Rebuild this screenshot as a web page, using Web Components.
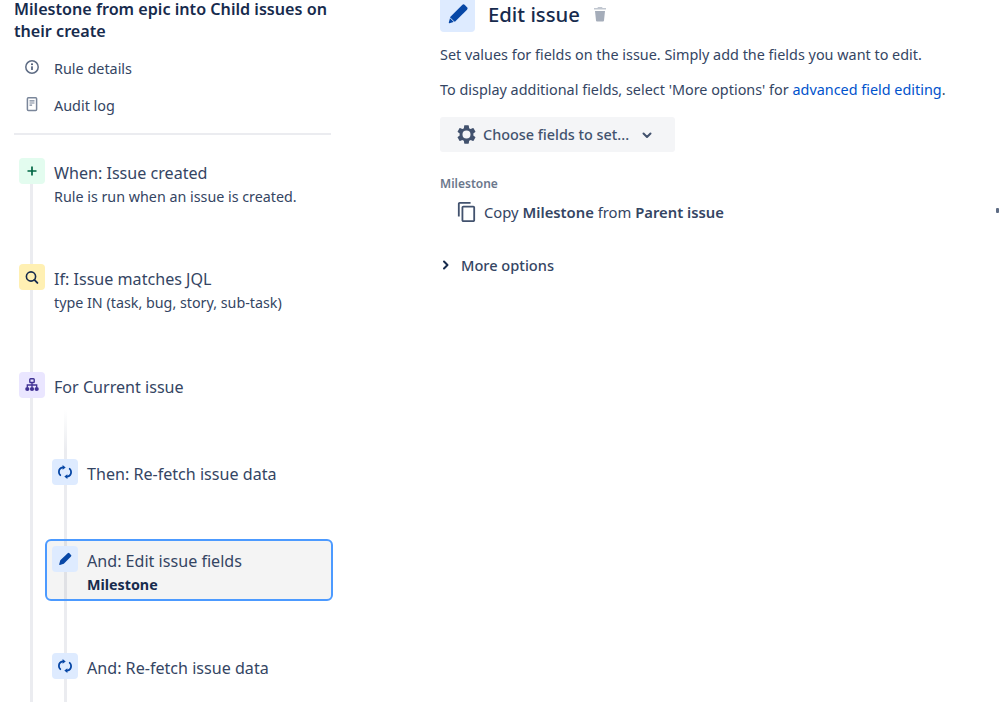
<!DOCTYPE html>
<html lang="en">
<head>
<meta charset="utf-8">
<title>Edit issue</title>
<style>
  html, body { margin: 0; height: 702px; overflow: hidden; background: #fff; }
  body { font-family: "Noto Sans", "Open Sans", sans-serif; color: #253858; }
</style>
</head>
<body>
<rule-page>
  <rule-sidebar slot="left" heading="Milestone from epic into Child issues on their create">
    <nav-link icon="info">Rule details</nav-link>
    <nav-link icon="log">Audit log</nav-link>
    <rule-flow slot="flow">
      <rule-step icon="plus" tone="green"><span>When: Issue created</span><span slot="sub">Rule is run when an issue is created.</span></rule-step>
      <rule-step icon="search" tone="yellow" style="margin-top:44px"><span>If: Issue matches JQL</span><span slot="sub">type IN (task, bug, story, sub-task)</span></rule-step>
      <rule-step icon="tree" tone="purple" style="margin-top:46px"><span>For Current issue</span></rule-step>
      <step-branch>
        <rule-step icon="refresh" tone="blue"><span>Then: Re-fetch issue data</span></rule-step>
        <rule-step icon="pencil" tone="blue" selected style="margin-top:49px"><span>And: Edit issue fields</span><b slot="sub">Milestone</b></rule-step>
        <rule-step icon="refresh" tone="blue" style="margin-top:45px"><span>And: Re-fetch issue data</span></rule-step>
      </step-branch>
    </rule-flow>
  </rule-sidebar>
  <edit-panel slot="right"></edit-panel>
</rule-page>

<script>
  const REFRESH_HALF = `<path d="M6 3.400C3.800 3.700 1.900 5.500 1.900 8c0 1.300.5 2.400 1.400 3.200" fill="none" stroke="#0747a6" stroke-width="1.800" stroke-linecap="round"/><path d="M5.600 1L8.700 3.400 5.600 5.800z" fill="#0747a6"/>`;

  const ICONS = {
    info: `<svg viewBox="0 0 16 16" width="16" height="16"><circle cx="8" cy="8" r="6.200" fill="none" stroke="#5e6c84" stroke-width="1.500"/><rect x="7.200" y="7.200" width="1.600" height="3.800" rx=".5" fill="#42526e"/><circle cx="8" cy="5.300" r="1" fill="#42526e"/></svg>`,
    log: `<svg viewBox="0 0 16 16" width="16" height="16"><rect x="3.400" y="1.800" width="9.200" height="12.800" rx="1" fill="none" stroke="#7a869a" stroke-width="1.500"/><path d="M5.500 4.800h5M5.500 7h5M5.500 9.200h2.600" stroke="#7a869a" stroke-width="1.200"/></svg>`,
    plus: `<svg viewBox="0 0 16 16" width="16" height="16"><path d="M8 3.500v9M3.500 8h9" stroke="#006644" stroke-width="1.700"/></svg>`,
    search: `<svg viewBox="0 0 16 16" width="16" height="16"><circle cx="7" cy="7.500" r="4.600" fill="none" stroke="#172b4d" stroke-width="1.600"/><path d="M10.400 10.900l3 3" stroke="#172b4d" stroke-width="1.900" stroke-linecap="round"/></svg>`,
    tree: `<svg viewBox="0 0 16 16" width="16" height="16"><rect x="5.800" y="1.700" width="4.400" height="3.800" rx=".8" fill="none" stroke="#403294" stroke-width="1.400"/><path d="M8 5.500v5M3.300 10.500V8h9.400v2.500" fill="none" stroke="#403294" stroke-width="1.300"/><circle cx="3.300" cy="12" r="2.100" fill="#403294"/><circle cx="8" cy="12" r="2.100" fill="#403294"/><circle cx="12.700" cy="12" r="2.100" fill="#403294"/></svg>`,
    refresh: `<svg viewBox="0 0 16 16" width="16" height="16">${REFRESH_HALF}<g transform="rotate(180 8 8)">${REFRESH_HALF}</g></svg>`,
    pencil: `<svg viewBox="0 0 16 16" width="16" height="16"><path d="M10.700 2.300a1.200 1.200 0 0 1 1.700 0l1.600 1.600a1.200 1.200 0 0 1 0 1.700l-7.200 7.200-3.900 1.100a.6.600 0 0 1-.7-.7l1.100-3.900z" fill="#0747a6"/></svg>`
  };

  class RulePage extends HTMLElement {
    constructor() {
      super();
      this.attachShadow({ mode: "open" });
      this.shadowRoot.innerHTML = `
        <style>
          :host { display: flex; height: 702px; overflow: hidden; padding-left: 14px; box-sizing: border-box; }
          ::slotted([slot=left]) { width: 319px; flex: none; }
          ::slotted([slot=right]) { flex: 1; margin-left: 107px; min-width: 0; }
        </style>
        <slot name="left"></slot>
        <slot name="right"></slot>`;
    }
  }

  class RuleSidebar extends HTMLElement {
    constructor() {
      super();
      this.attachShadow({ mode: "open" });
    }
    connectedCallback() {
      this.shadowRoot.innerHTML = `
        <style>
          :host { display: flex; flex-direction: column; height: 100%; }
          h1 { margin: -2px 0 0; font-size: 16.15px; line-height: 22px; font-weight: 600; color: #172b4d; width: 318px; }
          nav { display: flex; flex-direction: column; gap: 13px; margin-top: 14px; }
          hr { border: 0; height: 2px; background: #ebecf0; margin: 16px 0 0; width: 317px; }
          ::slotted([slot=flow]) { flex: 1; margin: 16px 0 0 -2px; }
        </style>
        <h1>${this.getAttribute("heading")}</h1>
        <nav><slot></slot></nav>
        <hr>
        <slot name="flow"></slot>`;
    }
  }

  class NavLink extends HTMLElement {
    constructor() {
      super();
      this.attachShadow({ mode: "open" });
    }
    connectedCallback() {
      this.shadowRoot.innerHTML = `
        <style>
          :host { display: flex; align-items: center; height: 24px; font-size: 14.4px; color: #344563; }
          .i { width: 16px; height: 16px; margin: -2px 14px 0 10px; flex: none; display: flex; }
          svg { display: block; }
        </style>
        <span class="i">${ICONS[this.getAttribute("icon")]}</span><slot></slot>`;
    }
  }

  class RuleFlow extends HTMLElement {
    constructor() {
      super();
      this.attachShadow({ mode: "open" });
      this.shadowRoot.innerHTML = `
        <style>
          :host { display: flex; flex-direction: column; position: relative; }
          .rail { position: absolute; left: 18px; top: 20px; bottom: 0; width: 3px; background: #ebecf0; }
        </style>
        <div class="rail"></div>
        <slot></slot>`;
    }
  }

  class StepBranch extends HTMLElement {
    constructor() {
      super();
      this.attachShadow({ mode: "open" });
      this.shadowRoot.innerHTML = `
        <style>
          :host { display: flex; flex-direction: column; flex: 1; position: relative; margin: 49px 0 0 33px; }
          .rail { position: absolute; left: 19px; top: -42px; bottom: 0; width: 3px;
                  background: linear-gradient(#fff, #ebecf0 40px); }
        </style>
        <div class="rail"></div>
        <slot></slot>`;
    }
  }

  const TONES = { green: "#e3fcef", yellow: "#fff0b3", purple: "#eae6ff", blue: "#deebff" };

  class RuleStep extends HTMLElement {
    constructor() {
      super();
      this.attachShadow({ mode: "open" });
    }
    connectedCallback() {
      this.shadowRoot.innerHTML = `
        <style>
          :host { display: flex; gap: 9px; position: relative; box-sizing: border-box;
                  padding: 5px 5px 2px; border: 2px solid transparent; border-radius: 6px; }
          :host([selected]) { border-color: #4c9aff; background: rgba(0, 0, 0, .045); }
          .tile { width: 26px; height: 26px; border-radius: 4px; display: flex; align-items: center; justify-content: center;
                  flex: none; background: ${TONES[this.getAttribute("tone")]}; }
          .tile svg { margin-top: -1px; }
          .text { padding-top: 3px; }
          .title { font-size: 16.1px; line-height: 24px; color: #344563; white-space: nowrap; }
          .sub { font-size: 14.3px; line-height: 24px; color: #344563; white-space: nowrap; }
          ::slotted(b) { color: #172b4d; font-weight: 700; }
        </style>
        <div class="tile">${ICONS[this.getAttribute("icon")]}</div>
        <div class="text">
          <div class="title"><slot></slot></div>
          <div class="sub"><slot name="sub"></slot></div>
        </div>`;
    }
  }

  class EditPanel extends HTMLElement {
    constructor() {
      super();
      this.attachShadow({ mode: "open" });
      this.shadowRoot.innerHTML = `
        <style>
          :host { display: block; color: #344563; font-size: 14.4px; }
          svg { display: block; flex: none; }
          header { display: flex; align-items: center; margin-top: -4px; }
          .tile { width: 35px; height: 36px; border-radius: 4px; background: #deebff; display: flex; align-items: center; justify-content: center; }
          h2 { margin: 0 0 0 13px; font-size: 20.3px; line-height: 36px; font-weight: 500; color: #172b4d; }
          header .trash { margin: -1px 0 0 13px; }
          p { margin: 0; line-height: 24px; }
          .p1 { margin-top: 11px; }
          .p2 { margin-top: 11px; }
          a { color: #0052cc; text-decoration: none; }
          button { display: flex; align-items: center; width: 235px; height: 35px; margin-top: 15px; padding: 0 0 0 15px; border: 0; border-radius: 3px;
                   background: #f4f5f7; color: #42526e; font: inherit; font-weight: 500; }
          button span { margin-left: 5px; }
          button .chev { margin-left: 12px; }
          label { display: block; margin-top: 24px; font-size: 12px; line-height: 16px; font-weight: 600; color: #6b778c; }
          .copy { display: flex; align-items: center; height: 24px; margin-top: 8px; padding-left: 17px; font-size: 14.8px; }
          .copy span { margin-left: 8px; }
          .copy b { font-weight: 600; }
          .copy i { display: block; width: 3px; height: 5px; border-radius: 1px; background: #5e6c84; margin: -3px 0 0 auto; }
          .more { display: flex; align-items: center; height: 24px; margin-top: 29px; padding-left: 2px; color: #172b4d; font-size: 14.6px; font-weight: 500; }
          .more span { margin-left: 11px; color: #344563; }
        </style>
        <header>
          <div class="tile"><svg viewBox="0 0 24 24" width="26" height="26"><path d="M15.900 3.700a1.700 1.700 0 0 1 2.400 0l2 2a1.700 1.700 0 0 1 0 2.400L9.400 19l-5.300 1.500a.5.500 0 0 1-.6-.6L5 14.600z" fill="#0747a6"/><path d="M4.600 15.400l4 4" stroke="#deebff" stroke-width=".9"/></svg></div>
          <h2>Edit issue</h2>
          <svg class="trash" viewBox="0 0 14 16" width="14" height="16"><path d="M5 1h4l.6 1H13v1.600H1V2h3.400z" fill="#c1c7d0"/><path d="M2 5h10l-1 9.500a1 1 0 0 1-1 .9H4a1 1 0 0 1-1-.9z" fill="#a5adba"/></svg>
        </header>
        <p class="p1">Set values for fields on the issue. Simply add the fields you want to edit.</p>
        <p class="p2">To display additional fields, select 'More options' for <a href="#">advanced field editing</a>.</p>
        <button>
          <svg viewBox="0 0 24 24" width="23" height="23"><path fill="#42526e" d="M19.140 12.940c.04-.3.06-.61.06-.94 0-.32-.02-.64-.07-.94l2.030-1.580a.49.49 0 0 0 .12-.61l-1.920-3.320a.488.488 0 0 0-.59-.22l-2.390.96c-.5-.38-1.030-.7-1.620-.94l-.36-2.540a.484.484 0 0 0-.48-.41h-3.840c-.24 0-.43.17-.47.41l-.36 2.540c-.59.24-1.130.57-1.620.94l-2.390-.96c-.22-.08-.47 0-.59.22L2.740 8.870c-.12.21-.08.47.12.61l2.030 1.580c-.05.3-.09.63-.09.94s.02.64.07.94l-2.030 1.580a.49.49 0 0 0-.12.61l1.920 3.320c.12.22.37.29.59.22l2.390-.96c.5.38 1.030.7 1.620.94l.36 2.540c.05.24.24.41.48.41h3.840c.24 0 .44-.17.47-.41l.36-2.540c.59-.24 1.130-.56 1.620-.94l2.390.96c.22.08.47 0 .59-.22l1.920-3.320c.12-.22.07-.47-.12-.61l-2.010-1.580zM12 16.200a4.200 4.200 0 1 1 0-8.400 4.200 4.200 0 0 1 0 8.400z"/></svg>
          <span>Choose fields to set...</span>
          <svg class="chev" viewBox="0 0 12 12" width="12" height="12"><path d="M2.500 4.500L6 8l3.500-3.500" fill="none" stroke="#42526e" stroke-width="2" stroke-linecap="round" stroke-linejoin="round"/></svg>
        </button>
        <label>Milestone</label>
        <div class="copy">
          <svg viewBox="1 0 21 24" width="19" height="22"><path fill="#42526e" d="M16 1H4c-1.100 0-2 .9-2 2v14h2V3h12V1zm3 4H8c-1.100 0-2 .9-2 2v14c0 1.100.9 2 2 2h11c1.100 0 2-.9 2-2V7c0-1.100-.9-2-2-2zm0 16H8V7h11v14z"/></svg>
          <span>Copy <b>Milestone</b> from <b>Parent issue</b></span>
          <i></i>
        </div>
        <div class="more">
          <svg viewBox="0 0 8 12" width="8" height="12"><path d="M2 2.500L5.500 6 2 9.500" fill="none" stroke="#172b4d" stroke-width="2" stroke-linecap="round" stroke-linejoin="round"/></svg>
          <span>More options</span>
        </div>`;
    }
  }

  customElements.define("rule-page", RulePage);
  customElements.define("rule-sidebar", RuleSidebar);
  customElements.define("nav-link", NavLink);
  customElements.define("rule-flow", RuleFlow);
  customElements.define("step-branch", StepBranch);
  customElements.define("rule-step", RuleStep);
  customElements.define("edit-panel", EditPanel);
</script>
</body>
</html>
